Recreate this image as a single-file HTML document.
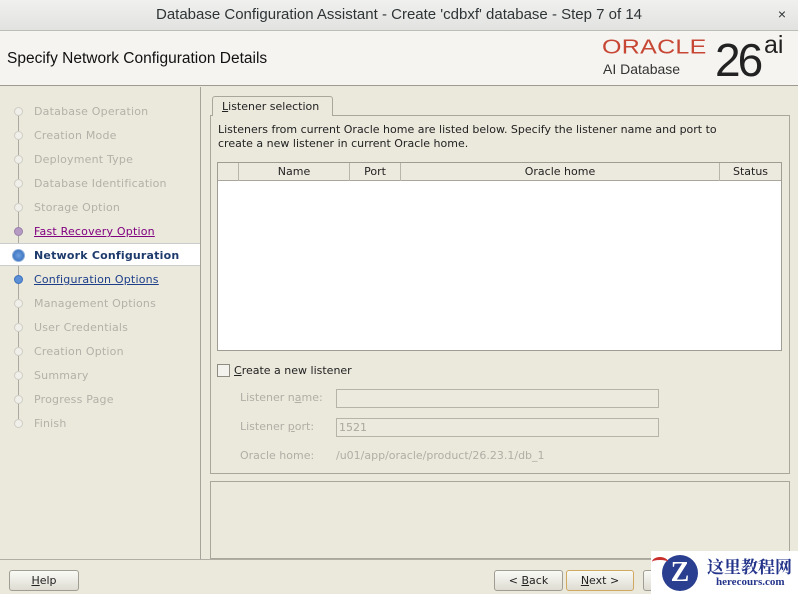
<!DOCTYPE html>
<html><head><style>
*{box-sizing:border-box;margin:0;padding:0}
body{width:798px;height:594px;overflow:hidden;background:#ebe8dc;font-family:"DejaVu Sans",sans-serif;font-size:11px;color:#222;position:relative}
.abs{position:absolute}
.title{left:0;top:0;width:798px;height:31px;background:linear-gradient(#f0f0ef,#e2e2e0);border-bottom:1px solid #bdbdb8;text-align:center;font-family:"Liberation Sans",sans-serif;font-size:15px;line-height:29px;color:#2e3436}
.hdr{left:0;top:31px;width:798px;height:55px;background:#f5f4f0;border-bottom:1px solid #9d9b90}
.step{left:34px;font-size:11px;color:#b3b1a8;letter-spacing:.2px}
.dot{left:14px;width:9px;height:9px;border-radius:50%;background:#f0efea;border:1px solid #cfcdc4}
.line{left:18px;width:1px;background:#aaa8a0}
.btn{height:21px;border:1px solid #a09e94;border-radius:3px;background:linear-gradient(#fafaf6,#dedcd2);text-align:center;line-height:19px;font-size:11px}
.th{top:0;height:18px;border-right:1px solid #b8b6ab;text-align:center;line-height:17px}
.lbl{color:#b0aea5;left:240px}
.inp{left:336px;width:323px;height:19px;border:1px solid #b6b4a9;background:#ece9de;color:#a9a79e;padding-left:2px;line-height:17px}
</style></head><body>
<div class="abs title">Database Configuration Assistant - Create 'cdbxf' database - Step 7 of 14<span style="position:absolute;right:12px;top:0;font-size:14px">×</span></div>
<div class="abs hdr">
 <div class="abs" style="left:7px;top:19px;font-family:'Liberation Sans',sans-serif;font-size:15.5px;color:#111">Specify Network Configuration Details</div>
 <div class="abs" style="left:602px;top:5px;font-family:'Liberation Sans',sans-serif;font-size:25px;color:#c74634;letter-spacing:.3px;transform:scaleY(.8);transform-origin:left top">ORACLE</div>
 <div class="abs" style="left:603px;top:30px;font-family:'Liberation Sans',sans-serif;font-size:14px;color:#333">AI Database</div>
 <div class="abs" style="left:715px;top:2px;font-family:'Liberation Sans',sans-serif;font-size:46px;color:#222;letter-spacing:-3px">26</div>
 <div class="abs" style="left:764px;top:0px;font-family:'Liberation Sans',sans-serif;font-size:25px;color:#222">ai</div>
</div>
<div class="abs" style="left:200px;top:87px;width:1px;height:472px;background:#a6a49a"></div>
<div class="abs line" style="top:111px;height:312px"></div>
<div class="abs" style="left:0;top:243px;width:200px;height:23px;background:#fff;border-top:1px solid #ccc;border-bottom:1px solid #ccc"></div>
<div class="abs dot" style="top:107px"></div><div class="abs step" style="top:105px">Database Operation</div>
<div class="abs dot" style="top:131px"></div><div class="abs step" style="top:129px">Creation Mode</div>
<div class="abs dot" style="top:155px"></div><div class="abs step" style="top:153px">Deployment Type</div>
<div class="abs dot" style="top:179px"></div><div class="abs step" style="top:177px">Database Identification</div>
<div class="abs dot" style="top:203px"></div><div class="abs step" style="top:201px">Storage Option</div>
<div class="abs dot" style="top:227px;background:#b59ac3;border-color:#9a7fa8"></div><div class="abs step" style="top:225px;color:#800080;text-decoration:underline">Fast Recovery Option</div>
<div class="abs dot" style="top:249px;left:12px;width:13px;height:13px;background:radial-gradient(#6fa0e0,#2e67b8);border-color:#8fb0da"></div><div class="abs step" style="top:249px;color:#1d3a6c;font-weight:bold">Network Configuration</div>
<div class="abs dot" style="top:275px;background:#5b8fd6;border-color:#3c70bb"></div><div class="abs step" style="top:273px;color:#1d3f8a;text-decoration:underline">Configuration Options</div>
<div class="abs dot" style="top:299px"></div><div class="abs step" style="top:297px">Management Options</div>
<div class="abs dot" style="top:323px"></div><div class="abs step" style="top:321px">User Credentials</div>
<div class="abs dot" style="top:347px"></div><div class="abs step" style="top:345px">Creation Option</div>
<div class="abs dot" style="top:371px"></div><div class="abs step" style="top:369px">Summary</div>
<div class="abs dot" style="top:395px"></div><div class="abs step" style="top:393px">Progress Page</div>
<div class="abs dot" style="top:419px"></div><div class="abs step" style="top:417px">Finish</div>

<div class="abs" style="left:210px;top:115px;width:580px;height:359px;border:1px solid #a9a79c;background:#ebe8dc"></div>
<div class="abs" style="left:212px;top:96px;width:121px;height:20px;border:1px solid #a9a79c;border-bottom:none;border-radius:3px 3px 0 0;background:#ebe8dc;padding-left:9px;line-height:19px"><u>L</u>istener selection</div>
<div class="abs" style="left:218px;top:123px;line-height:14px">Listeners from current Oracle home are listed below. Specify the listener name and port to<br>create a new listener in current Oracle home.</div>
<div class="abs" style="left:217px;top:162px;width:565px;height:189px;border:1px solid #9f9d93;background:#fff">
 <div class="abs" style="left:0;top:0;width:563px;height:18px;background:#ece9de;border-bottom:1px solid #a9a79c"></div>
 <div class="abs th" style="left:0;width:21px"></div>
 <div class="abs th" style="left:21px;width:111px">Name</div>
 <div class="abs th" style="left:132px;width:51px">Port</div>
 <div class="abs th" style="left:183px;width:319px">Oracle home</div>
 <div class="abs th" style="left:502px;width:61px;border:none">Status</div>
</div>
<div class="abs" style="left:217px;top:364px;width:13px;height:13px;border:1px solid #8e8c82;background:#f3f2ec"></div>
<div class="abs" style="left:234px;top:364px"><u>C</u>reate a new listener</div>
<div class="abs lbl" style="top:391px">Listener n<u>a</u>me:</div>
<div class="abs inp" style="top:389px"></div>
<div class="abs lbl" style="top:420px">Listener <u>p</u>ort:</div>
<div class="abs inp" style="top:418px">1521</div>
<div class="abs lbl" style="top:449px">Oracle home:</div>
<div class="abs lbl" style="left:336px;top:449px">/u01/app/oracle/product/26.23.1/db_1</div>

<div class="abs" style="left:210px;top:481px;width:580px;height:78px;border:1px solid #a9a79c;background:#ebe8dc"></div>
<div class="abs" style="left:0;top:559px;width:798px;height:1px;background:#b0aea4"></div>
<div class="abs btn" style="left:9px;top:570px;width:70px"><u>H</u>elp</div>
<div class="abs btn" style="left:494px;top:570px;width:69px">&lt; <u>B</u>ack</div>
<div class="abs btn" style="left:566px;top:570px;width:68px;border-color:#d0a860"><u>N</u>ext &gt;</div>
<div class="abs btn" style="left:643px;top:570px;width:20px"></div>
<div class="abs" style="left:651px;top:551px;width:147px;height:43px;background:#fff"></div>
<div class="abs" style="left:662px;top:555px;width:36px;height:36px;border-radius:50%;background:#2a3f8f;color:#fff;font:bold 28px 'Liberation Serif',serif;text-align:center;line-height:36px">Z</div>
<div class="abs" style="left:652px;top:557px;width:16px;height:10px;border-top:3px solid #c9302c;border-radius:50%"></div>
<div class="abs" style="left:707px;top:553px;font:bold 17px 'Noto Serif CJK SC',serif;color:#24348a">这里教程网</div>
<div class="abs" style="left:716px;top:576px;font:bold 11px 'Liberation Serif',serif;color:#24348a">herecours.com</div>
</body></html>
